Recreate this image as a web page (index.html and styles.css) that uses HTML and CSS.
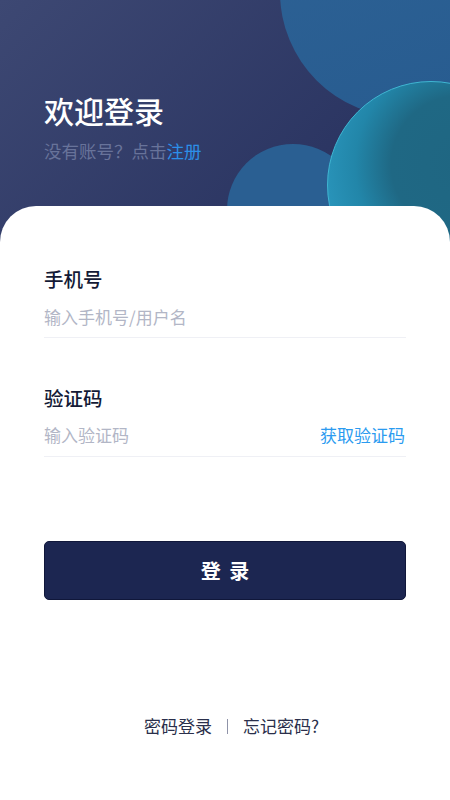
FILE: index.html
```html
<!DOCTYPE html>
<html lang="zh-CN">
<head>
<meta charset="utf-8">
<title>欢迎登录</title>
<link rel="stylesheet" href="styles.css">
</head>
<body>
<div class="page">
  <header class="hero">
    <div class="bubble bubble-big"></div>
    <div class="bubble bubble-small"></div>
    <div class="bubble bubble-teal"></div>
    <h1 class="title">欢迎登录</h1>
    <p class="subtitle">没有账号？点击<a class="link-register">注册</a></p>
  </header>
  <main class="card">
    <div class="field">
      <div class="field-label">手机号</div>
      <div class="field-row">
        <span class="placeholder">输入手机号/用户名</span>
      </div>
    </div>
    <div class="field field-second">
      <div class="field-label">验证码</div>
      <div class="field-row">
        <span class="placeholder">输入验证码</span>
        <span class="code-btn">获取验证码</span>
      </div>
    </div>
    <button class="login-btn">登 录</button>
    <div class="bottom-links">
      <span>密码登录</span>
      <span class="sep"></span>
      <span>忘记密码?</span>
    </div>
  </main>
</div>
</body>
</html>
```

FILE: styles.css
```css
* { box-sizing: border-box; }
html, body {
  margin: 0;
  padding: 0;
}
body {
  font-family: "Noto Sans CJK SC", "Noto Sans", sans-serif;
  background: #ffffff;
}
.page {
  width: 450px;
  height: 800px;
  overflow: hidden;
  display: flex;
  flex-direction: column;
  background: linear-gradient(135deg, #3d4873 0%, #2b3562 40%, #1f2751 75%, #1e2650 100%);
}
.hero {
  position: relative;
  height: 206px;
  flex: none;
  padding: 90px 0 0 44px;
}
.bubble {
  position: absolute;
  border-radius: 50%;
}
.bubble-big {
  left: 280px;
  top: -133px;
  width: 250px;
  height: 250px;
  background: linear-gradient(160deg, #2e6396 0%, #275b8f 100%);
}
.bubble-small {
  left: 227px;
  top: 144px;
  width: 132px;
  height: 132px;
  background: #2a5f92;
}
.bubble-teal {
  left: 327px;
  top: 81px;
  width: 208px;
  height: 208px;
  border: 1px solid #3fb6d2;
  background: radial-gradient(circle at 64% 40%, #1f6682 0%, #1f6884 38%, #2286a9 58%, #2994ba 76%, #2b95ba 100%);
}
.title {
  position: relative;
  margin: 0;
  font-size: 30px;
  line-height: 40px;
  font-weight: 500;
  color: #ffffff;
}
.subtitle {
  position: relative;
  margin: 9px 0 0;
  font-size: 17.5px;
  line-height: 24px;
  color: #68739a;
}
.link-register {
  color: #2c8fe8;
}
.card {
  position: relative;
  z-index: 2;
  flex: 1;
  background: #ffffff;
  border-radius: 36px 36px 0 0;
  padding: 59px 44px 0;
  display: flex;
  flex-direction: column;
}
.field-second {
  margin-top: 45.5px;
}
.field-label {
  font-size: 19.5px;
  line-height: 28px;
  font-weight: 500;
  color: #141a36;
}
.field-row {
  margin-top: 12px;
  display: flex;
  justify-content: space-between;
  align-items: center;
  height: 33px;
  padding-bottom: 9px;
  border-bottom: 1.5px solid #eff0f5;
  font-size: 17px;
  line-height: 24px;
}
.placeholder {
  color: #b2b6c6;
}
.code-btn {
  color: #2b9bf0;
  margin-right: 1px;
}
.login-btn {
  margin: 84.5px 0 0;
  height: 59px;
  width: 100%;
  border: 1px solid #10173a;
  border-radius: 5px;
  background: #1c2651;
  color: #ffffff;
  font-family: "Noto Sans CJK SC", sans-serif;
  font-size: 20px;
  font-weight: 700;
  letter-spacing: 2px;
  padding: 0 0 0 2px;
}
.bottom-links {
  margin-top: 114px;
  padding-left: 13px;
  display: flex;
  justify-content: center;
  align-items: center;
  gap: 15px;
  font-size: 17px;
  line-height: 24px;
  color: #2a2f4b;
}
.sep {
  width: 1px;
  height: 15px;
  background: #8f93a8;
}
```
